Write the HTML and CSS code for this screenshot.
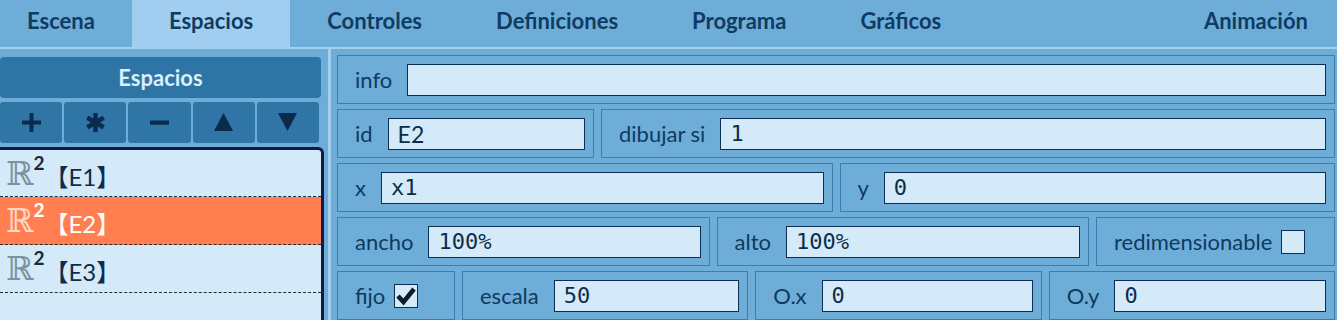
FILE: index.html
```html
<!DOCTYPE html>
<html lang="es">
<head>
    <meta charset="UTF-8">
    <meta name="viewport" content="width=device-width, initial-scale=1.0">
    <title>Editor de espacios</title>
    <link rel="stylesheet" href="styles.css">
</head>
<body>
    <div class="tabs">
        <div class="tab">Escena</div>
        <div class="tab active">Espacios</div>
        <div class="tab">Controles</div>
        <div class="tab">Definiciones</div>
        <div class="tab">Programa</div>
        <div class="tab">Gráficos</div>
        <div class="tab last">Animación</div>
    </div>

    <div class="main">
        <div class="side">
            <div class="side-title">Espacios</div>
            <div class="tools">
                <button class="tool" title="agregar">
                    <svg width="19" height="19" viewBox="0 0 19 19"><rect x="0" y="7.5" width="19" height="4"/><rect x="7.5" y="0" width="4" height="19"/></svg>
                </button>
                <button class="tool" title="copiar">
                    <svg width="19" height="19" viewBox="0 0 19 19"><g stroke-width="4.4" stroke="currentColor"><line x1="9.5" y1="0" x2="9.5" y2="19"/><line x1="1.3" y1="4.75" x2="17.7" y2="14.25"/><line x1="1.3" y1="14.25" x2="17.7" y2="4.75"/></g></svg>
                </button>
                <button class="tool" title="eliminar">
                    <svg width="19" height="19" viewBox="0 0 19 19"><rect x="0" y="7.5" width="19" height="4.2"/></svg>
                </button>
                <button class="tool" title="subir">
                    <svg width="19" height="19" viewBox="0 0 19 19"><polygon points="9.5,0 19,18 0,18"/></svg>
                </button>
                <button class="tool" title="bajar">
                    <svg width="19" height="19" viewBox="0 0 19 19"><polygon points="0,0 19,0 9.5,18"/></svg>
                </button>
            </div>
            <ul class="space-list">
                <li class="space"><span class="rr">ℝ</span><sup>2</sup><span class="sid">【E1】</span></li>
                <li class="space selected"><span class="rr">ℝ</span><sup>2</sup><span class="sid">【E2】</span></li>
                <li class="space"><span class="rr">ℝ</span><sup>2</sup><span class="sid">【E3】</span></li>
                <li class="space"></li>
            </ul>
        </div>

        <div class="splitter"></div>

        <div class="editor">
            <div class="row">
                <div class="field"><label>info</label><input class="val txt" value=""></div>
            </div>
            <div class="row">
                <div class="field w-id"><label>id</label><input class="val txt" value="E2"></div>
                <div class="field"><label>dibujar si</label><input class="val" value="1"></div>
            </div>
            <div class="row">
                <div class="field"><label>x</label><input class="val" value="x1"></div>
                <div class="field"><label>y</label><input class="val" value="0"></div>
            </div>
            <div class="row">
                <div class="field"><label>ancho</label><input class="val" value="100%"></div>
                <div class="field"><label>alto</label><input class="val" value="100%"></div>
                <div class="field w-redim"><label>redimensionable</label><span class="check"></span></div>
            </div>
            <div class="row">
                <div class="field w-fijo"><label>fijo</label>
                    <span class="check"><svg width="22" height="22" viewBox="0 0 22 22"><polyline points="3,11 8.5,17 19,4" fill="none" stroke="#0d1b2b" stroke-width="4.5"/></svg></span>
                </div>
                <div class="field"><label>escala</label><input class="val" value="50"></div>
                <div class="field"><label>O.x</label><input class="val" value="0"></div>
                <div class="field"><label>O.y</label><input class="val" value="0"></div>
            </div>
        </div>
    </div>
</body>
</html>
```

FILE: styles.css
```css
/* Base */
* {
    margin: 0;
    padding: 0;
    box-sizing: border-box;
}

html, body {
    height: 320px;
    overflow: hidden;
}

body {
    background-color: #6fadd9;
    font-family: Lato, "Open Sans", sans-serif;
    color: #0d3a5f;
}

/* Barra de pestañas */
.tabs {
    display: flex;
    height: 49px;
    margin-left: -10px;
    border-bottom: 2px solid #a5d0f0;
}

.tab {
    height: 47px;
    padding: 0 37px;
    line-height: 42px;
    font-size: 22px;
    font-weight: bold;
    color: #0e3c62;
    white-space: nowrap;
}

.tab.active {
    background-color: #a1cef0;
}

.tab.last {
    margin-left: auto;
    padding-right: 29px;
}

/* Contenido */
.main {
    display: flex;
    height: 271px;
}

.side {
    flex: 0 0 328px;
    padding-top: 8px;
    display: flex;
    flex-direction: column;
}

.side-title {
    width: 321px;
    height: 41px;
    line-height: 41px;
    background-color: #2e74a5;
    border-radius: 4px;
    color: #d8effc;
    font-size: 22px;
    font-weight: bold;
    text-align: center;
}

.tools {
    display: flex;
    gap: 2px;
    width: 319px;
    margin-top: 4px;
}

.tool {
    flex: 1;
    height: 41px;
    border: none;
    border-radius: 3px;
    background-color: #2f75a6;
    color: #0b2a4c;
    display: flex;
    align-items: center;
    justify-content: center;
}

.tool svg {
    fill: currentColor;
}

.space-list {
    list-style: none;
    width: 324px;
    flex: 1;
    margin-top: 4px;
    background-color: #d4eaf9;
    border-top: 3px solid #0c1b4c;
    border-right: 3px solid #0c1b4c;
    border-top-right-radius: 6px;
}

.space {
    height: 48px;
    display: flex;
    align-items: center;
    padding-left: 6px;
    border-bottom: 1px dashed #1c2b3a;
    color: #0d2d4a;
}

.space:first-child {
    height: 47px;
}

.space:last-child {
    border-bottom: none;
}

.space .rr {
    font-family: "DejaVu Serif", serif;
    font-size: 33px;
    color: #7b92a1;
    line-height: 1;
}

.space sup {
    font-size: 19px;
    font-weight: bold;
    color: #1b2a38;
    align-self: flex-start;
    margin-top: 1px;
}

.space .sid {
    font-family: Lato, "Noto Sans CJK JP", sans-serif;
    font-size: 24px;
    padding-top: 4px;
}

.space.selected {
    background-color: #ff7f50;
    color: #ffffff;
}

.space.selected .rr {
    color: #ffd8c6;
}

.space.selected sup {
    color: #ffffff;
}

.splitter {
    flex: 0 0 3px;
    background-color: #a3cfef;
}

/* Editor de propiedades */
.editor {
    flex: 1;
    min-width: 0;
    padding: 6px 2px 0 6px;
    display: flex;
    flex-direction: column;
    gap: 5px;
}

.row {
    display: flex;
    gap: 7px;
    height: 49px;
    flex-shrink: 0;
}

.field {
    flex: 1;
    min-width: 0;
    display: flex;
    align-items: center;
    padding: 0 8px 0 17px;
    border: 1px solid #3b7cb1;
}

.w-id { flex: 0 0 257px; }
.w-redim { flex: 0 0 239px; }
.w-fijo { flex: 0 0 118px; }

.field label {
    font-size: 22px;
    color: #0d3a5f;
    margin-right: 15px;
    white-space: nowrap;
}

.val {
    flex: 1;
    width: 0;
    min-width: 0;
    height: 32px;
    border: 1px solid #0b2f52;
    background-color: #d4eaf9;
    font-family: "DejaVu Sans Mono", monospace;
    font-size: 22px;
    color: #0d2d4a;
    padding: 0 9px;
    outline: none;
}

.val.txt {
    font-family: Lato, sans-serif;
    font-size: 23px;
}

.check {
    width: 24px;
    height: 24px;
    border: 1px solid #0b2f52;
    background-color: #d4eaf9;
    display: flex;
    align-items: center;
    justify-content: center;
    margin-left: -6px;
}
```
